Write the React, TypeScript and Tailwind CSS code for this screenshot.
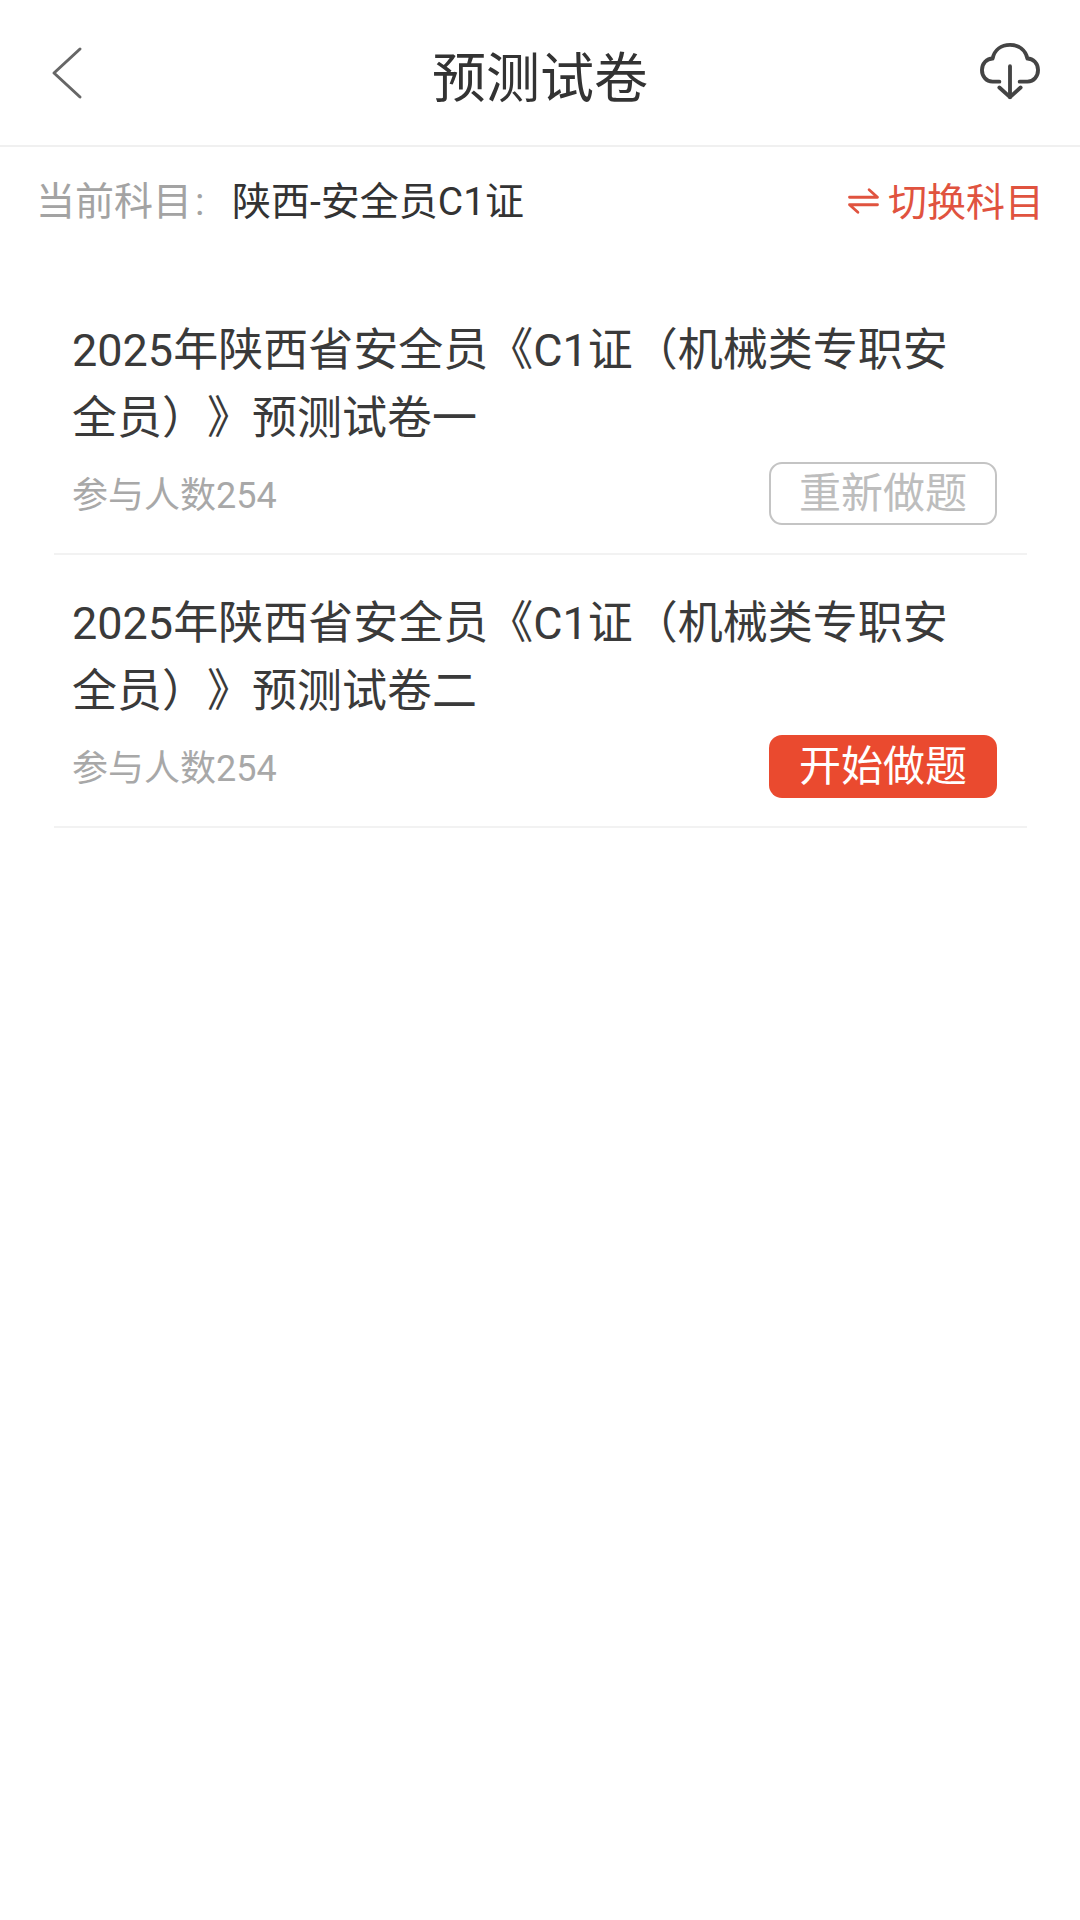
const font = { fontFamily: 'Roboto, "Noto Sans CJK SC", "Noto Sans", sans-serif' };

const papers = [
  { id: 1, name: "一", done: true },
  { id: 2, name: "二", done: false },
];

export default function App() {
  return (
    <div className="h-[1920px] w-[1080px] overflow-hidden bg-white [text-spacing-trim:space-all]" style={font}>
      {/* 顶栏 */}
      <div className="flex h-[147px] items-center border-b-2 border-[#f0f0f0] px-[40px]">
        <div className="flex-1">
          <svg className="ml-[10px]" width="34" height="54" viewBox="0 0 34 54" fill="none" stroke="#666" strokeWidth="3" strokeLinecap="round" strokeLinejoin="round">
            <path d="M30 3 L4 27 L30 51" />
          </svg>
        </div>
        <h1 className="pt-[14px] text-[54px] leading-none text-[#333]">预测试卷</h1>
        <div className="flex flex-1 justify-end">
          <svg className="mb-[2px]" width="60" height="58" viewBox="0 0 62 60" fill="none" stroke="#444" strokeWidth="4" strokeLinecap="round" strokeLinejoin="round">
            <path d="M20 40 H13 C6 40 2 34 2 28 C2 21 7 16 13 16 C15 7 22 2 31 2 C40 2 47 7 49 16 C55 16 60 21 60 28 C60 34 56 40 49 40 H41" />
            <path d="M31 24 V56" />
            <path d="M20 46 L31 56 L42 46" />
          </svg>
        </div>
      </div>

      {/* 当前科目 */}
      <div className="flex h-[110px] items-center justify-between px-[36px] text-[39px] leading-none">
        <div className="flex items-center">
          <span className="w-[196px] text-[#a3a3a3]">
            当前科目<span className="ml-[3px]">:</span>
          </span>
          <span className="text-[#333]">陕西-安全员C1证</span>
        </div>
        <div className="flex items-center gap-[8px] text-[#e0533f]">
          <svg className="mb-[3px]" width="33" height="28" viewBox="0 0 34 30" fill="none" stroke="#e0533f" strokeWidth="3" strokeLinecap="round" strokeLinejoin="round">
            <path d="M2 11 H32 L23 3" />
            <path d="M32 19 H2 L11 27" />
          </svg>
          <span className="pt-[3px] text-[39px]">切换科目</span>
        </div>
      </div>

      {/* 试卷列表 */}
      <div className="ml-[54px] mr-[53px] mt-[25px]">
        {papers.map((p) => (
          <div key={p.id} className="h-[273px] border-b-2 border-[#f2f2f2] pl-[18px] pr-[30px] pt-[35px]">
            <p className="pr-[10px] text-[45px] leading-[68px] text-[#3a3a3a]">
              2025年陕西省安全员《C1证（机械类专职安全员）》预测试卷{p.name}
            </p>
            <div className="mt-[9px] flex items-center justify-between">
              <span className="pt-[4px] text-[36px] text-[#a8a8a8]">参与人数254</span>
              {p.done ? (
                <button className="flex h-[63px] w-[228px] items-center justify-center rounded-[13px] border-2 border-[#c4c4c4] text-[42px] text-[#bdbdbd]">
                  重新做题
                </button>
              ) : (
                <button className="flex h-[63px] w-[228px] items-center justify-center rounded-[13px] bg-[#ea4a2f] text-[42px] text-white">
                  开始做题
                </button>
              )}
            </div>
          </div>
        ))}
      </div>
    </div>
  );
}
